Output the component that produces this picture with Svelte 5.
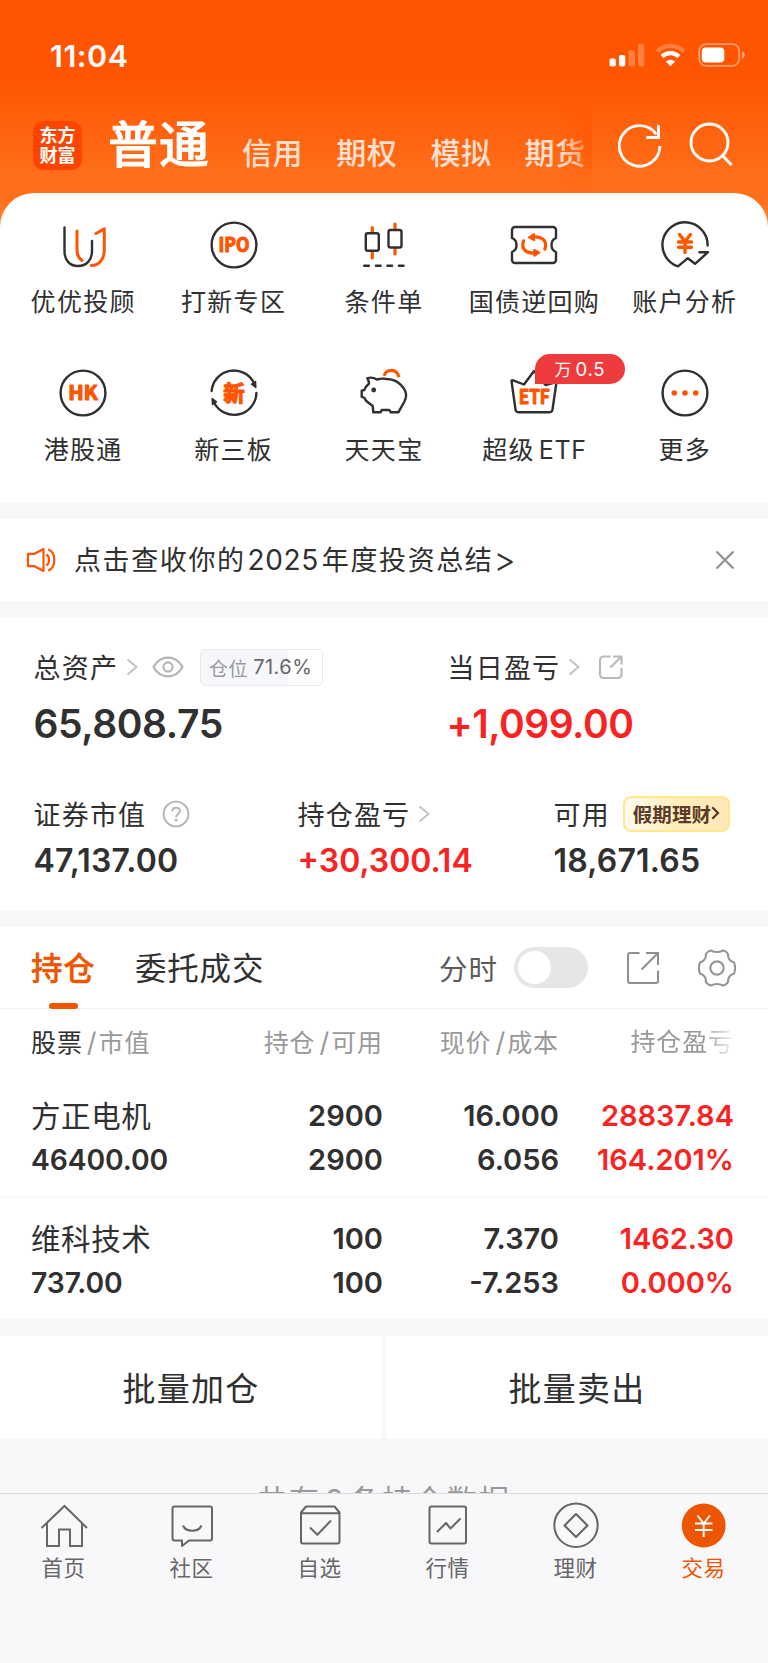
<script>
  const accounts = ['信用', '期权', '模拟', '期货'];
  const shortcuts = [
    { icon: 'uu', label: '优优投顾' },
    { icon: 'ipo', label: '打新专区' },
    { icon: 'cond', label: '条件单' },
    { icon: 'bond', label: '国债逆回购' },
    { icon: 'analysis', label: '账户分析' },
    { icon: 'hk', label: '港股通' },
    { icon: 'neeq', label: '新三板' },
    { icon: 'pig', label: '天天宝' },
    { icon: 'etf', label: '超级', latin: 'ETF', badge: true },
    { icon: 'more', label: '更多' }
  ];
  const positions = [
    { name: '方正电机', value: '46400.00', held: '2900', usable: '2900', price: '16.000', cost: '6.056', profit: '28837.84', rate: '164.201%' },
    { name: '维科技术', value: '737.00', held: '100', usable: '100', price: '7.370', cost: '-7.253', profit: '1462.30', rate: '0.000%' }
  ];
  const tabs = [
    { icon: 'home', label: '首页' },
    { icon: 'chat', label: '社区' },
    { icon: 'pick', label: '自选' },
    { icon: 'market', label: '行情' },
    { icon: 'wealth', label: '理财' },
    { icon: 'trade', label: '交易' }
  ];
</script>

{#snippet chevron()}
  <svg class="chev" width="12" height="18" viewBox="0 0 12 18"><path d="M1.5 1.5 10.5 9l-9 7.5" fill="none" stroke="#c0c0c0" stroke-width="1.8" /></svg>
{/snippet}

<div class="app">
  <header>
    <div class="status">
      <span class="time">11:04</span>
      <svg width="138" height="26" viewBox="0 0 138 26">
        <g fill="#fff">
          <rect x="1.5" y="15.5" width="6.3" height="8" rx="1.8" />
          <rect x="11" y="12" width="6.3" height="11.5" rx="1.8" />
          <g opacity=".25"><rect x="20.6" y="7" width="6.3" height="16.5" rx="1.8" /><rect x="30" y="1" width="6.3" height="22.5" rx="1.8" /></g>
        </g>
        <g fill="none" stroke="#fff">
          <path d="M49.2 8.4a19 19 0 0 1 26.6 0" stroke-width="4.2" opacity=".25" />
          <path d="M54 13.6a12.3 12.3 0 0 1 17 0" stroke-width="4.2" />
          <rect x="91.2" y="1.2" width="40" height="21.6" rx="6.8" stroke-width="1.8" opacity=".42" />
        </g>
        <path d="M62.5 23.2l-4.6-4.6a6.6 6.6 0 0 1 9.2 0z" fill="#fff" />
        <rect x="93.8" y="4.4" width="22.5" height="15.2" rx="4" fill="#fff" />
        <path d="M134 8.3c3.6 1 3.6 6.4 0 7.4z" fill="#fff" opacity=".5" />
      </svg>
    </div>
    <div class="nav">
      <div class="logo"><span>东方</span><span>财富</span></div>
      <div class="current">普通</div>
      <div class="accounts">
        {#each accounts as a}<span>{a}</span>{/each}
        <i class="fade"></i>
      </div>
      <svg class="refresh" width="44" height="46" viewBox="0 0 44 46" fill="none" stroke="#fff" stroke-width="2.9">
        <path d="M41.900 24A20.300 20.300 0 1 1 38.400 12.500" /><path d="M40.500 3v12.500H28.300" />
      </svg>
      <svg class="search" width="44" height="46" viewBox="0 0 44 46" fill="none" stroke="#fff" stroke-width="2.9">
        <circle cx="20.500" cy="20.500" r="18.500" /><path d="M33.500 33.500 42.500 43" />
      </svg>
    </div>
  </header>

  <section class="shortcuts">
    {#each shortcuts as s}
      <div class="shortcut">
        <div class="ico">
          <svg width="48" height="48" viewBox="0 0 48 48" fill="none" stroke="#303030" stroke-width="2.4" stroke-linecap="round" stroke-linejoin="round">
            {#if s.icon === 'uu'}
              <path d="M5.500 6.500V30c0 9 5 15 13.500 15S33 39 33 30V20" />
              <g stroke="#ff5500" stroke-width="3"><path d="M18 10v19c0 4.500 2 8.500 5 10.500M37 12.500l8.300-4.600V29c0 9-4.800 15.300-13 15.600" /></g>
            {:else if s.icon === 'ipo'}
              <circle cx="24" cy="24" r="22.400" />
              <text x="24" y="31" textLength="31" lengthAdjust="spacingAndGlyphs" font-size="19.500">IPO</text>
            {:else if s.icon === 'cond'}
              <g stroke="#ff5500" stroke-width="3.200"><path d="M12.300 6.500v5M12.300 31.500v5.500M35 3v5.500M35 27.500v5.500" /></g>
              <rect x="5.800" y="12.300" width="13" height="17.500" rx="2" /><rect x="28.500" y="9" width="13" height="17.500" rx="2" />
              <path d="M4.300 44.700h4.500M16 44.700h4.500M27.500 44.700H32M39 44.700h4.500" stroke-width="2.600" />
            {:else if s.icon === 'bond'}
              <path d="M5 6h38a3 3 0 0 1 3 3V17c-2.500 1-4.500 3.500-4.500 7s2 6 4.500 7v8a3 3 0 0 1-3 3H5a3 3 0 0 1-3-3v-8c2.500-1 4.500-3.500 4.500-7S4.500 18 2 17V9a3 3 0 0 1 3-3z" />
              {#each [0, 180] as turn}
                <g stroke="#ff5500" stroke-width="3.200" transform="rotate({turn} 24.200 24)"><path d="M13.600 19.800c-2.500 6.500.5 12 9.400 12.300" /><path d="M24.200 28.800v6l5.200-3.200z" fill="#ff5500" stroke-width="2" /></g>
              {/each}
            {:else if s.icon === 'analysis'}
              <path d="M46.600 24.500A22.600 22.600 0 1 0 17 45.400l9.800-8.200 7.200 5.600 13-11.600h-8.500" />
              <path d="m18.500 13.500 5.500 7 5.500-7M24 21v10.500M17.500 21h13M17.500 26.300h13" stroke="#ff5500" stroke-width="3.400" />
            {:else if s.icon === 'hk'}
              <circle cx="24" cy="24" r="22.400" />
              <text x="24" y="31" textLength="29.500" lengthAdjust="spacingAndGlyphs" font-size="19.500">HK</text>
            {:else if s.icon === 'neeq'}
              <path d="M1.600 22A22.400 22.400 0 0 1 44 14M46.400 24A22.400 22.400 0 0 1 4 33.500" />
              <path d="M45.500 12.500l.3 6-4.200-3.300zM2.500 35.500l-.3-6 4.200 3.300z" fill="#303030" stroke-width="1.500" />
              <text x="24" y="31.500" font-size="21.500">新</text>
            {:else if s.icon === 'pig'}
              <path d="M7.300 9.300C10 8.300 14.500 9 17 10.500 20 9.600 24 9.500 27 10c4 .2 8 1.200 11.300 3.700C42 16.500 45 20 46 24.500c.6 3-.5 5.500-1.500 8L38.300 43.300h-7.600L29.300 41h-7.600l-1 2.300h-7.400L12.700 37 6 31.700 4.500 29 1.700 27.700v-6l2.600-.7C5 18.500 6.800 16.500 9 14.500c0-2-.7-3.700-1.700-5.200z" />
              <circle cx="13.700" cy="21" r="2.400" fill="#303030" stroke="none" />
              <path d="M24 6.700C26-.5 37-1 39 8.200" stroke="#ff5500" stroke-width="3.200" stroke-linecap="butt" />
            {:else if s.icon === 'etf'}
              <path d="m1.500 12 4 28.500a3 3 0 0 0 3 2.700h31a3 3 0 0 0 3-2.700l4-27.500-11 3L24 2 14 15.500 3 11.300q-1.500-.4-1.500.7z" />
              <text x="24.200" y="35.300" textLength="31" lengthAdjust="spacingAndGlyphs" font-size="19.500">ETF</text>
            {:else}
              <circle cx="24" cy="24" r="22.400" />
              <g fill="#ff5500" stroke="none"><circle cx="13.300" cy="24" r="2.800" /><circle cx="24" cy="24" r="2.800" /><circle cx="34.700" cy="24" r="2.800" /></g>
            {/if}
          </svg>
          {#if s.badge}<b class="badge">万<span>0.5</span></b>{/if}
        </div>
        <div class="label">{s.label}{#if s.latin}<span class="latin">{s.latin}</span>{/if}</div>
      </div>
    {/each}
  </section>

  <section class="notice">
    <svg width="30" height="28" viewBox="0 0 30 28" fill="none" stroke="#ff5500" stroke-width="2.200" stroke-linejoin="round">
      <path d="M2 7.800h6.500L17.500 3v22l-9-4.800H2zM20.500 8.500c3.500 2.500 3.500 8.500 0 11M22.300 3.300c8 3.700 8 17.700 0 21.400" />
    </svg>
    <p>点击查收你的<span>2025</span>年度投资总结<em>&gt;</em></p>
    <svg width="20" height="20" viewBox="0 0 20 20" stroke="#8e8e8e" stroke-width="2.100"><path d="m1.500 1.500 17 17M18.500 1.500l-17 17" /></svg>
  </section>

  <section class="assets">
    <div class="top">
      <div class="cell">
        <div class="cap">
          总资产{@render chevron()}
          <svg class="eye" width="32" height="24" viewBox="0 0 32 24" fill="none" stroke="#b5b5b5" stroke-width="2.100"><path d="M1.500 12C8.500-.5 23.500-.5 30.500 12 23.500 24.500 8.500 24.500 1.500 12z" /><circle cx="16" cy="12" r="4.600" /></svg>
          <span class="ratio">仓位<span>71.6%</span></span>
        </div>
        <div class="big">65,808.75</div>
      </div>
      <div class="cell">
        <div class="cap">
          当日盈亏{@render chevron()}
          <svg class="share" width="26" height="26" viewBox="0 0 26 26" fill="none" stroke="#b8b8b8" stroke-width="2.100"><path d="M12.500 2.500H5.500a3.500 3.500 0 0 0-3.500 3.500v14.500a3.500 3.500 0 0 0 3.500 3.500H20a3.500 3.500 0 0 0 3.500-3.500v-6.500M15 2.500h8.500v8M23.300 2.700 12.500 13.500" /></svg>
        </div>
        <div class="big red plus">+1,099.00</div>
      </div>
    </div>
    <div class="sub">
      <div class="cell">
        <div class="cap">证券市值
          <svg class="help" width="28" height="28" viewBox="0 0 28 28" fill="none" stroke="#b5b5b5" stroke-width="1.900"><circle cx="14" cy="14" r="12.400" /><path d="M10.200 11.500c0-5 7.800-4.800 7.800-.6 0 3-3.900 3.200-3.900 6.300" /><circle cx="14.100" cy="20" r=".6" /></svg>
        </div>
        <div class="mid">47,137.00</div>
      </div>
      <div class="cell">
        <div class="cap">持仓盈亏{@render chevron()}</div>
        <div class="mid red gain">+30,300.14</div>
      </div>
      <div class="cell">
        <div class="cap">可用<span class="promo">假期理财<svg width="9" height="14" viewBox="0 0 9 14"><path d="m1.300 1.300 5.700 5.700-5.700 5.700" fill="none" stroke="#5b3a28" stroke-width="2.300" /></svg></span></div>
        <div class="mid">18,671.65</div>
      </div>
    </div>
  </section>

  <section class="holdings">
    <div class="bar">
      <div class="tab on">持仓</div>
      <div class="tab">委托成交</div>
      <div class="intraday">分时</div>
      <div class="toggle"><i></i></div>
      <svg class="out" width="34" height="34" viewBox="0 0 34 34" fill="none" stroke="#8f8f8f" stroke-width="2"><path d="M13.500 2H4a2 2 0 0 0-2 2v26a2 2 0 0 0 2 2h26a2 2 0 0 0 2-2V19.500M20 2h12v12M32 2 15.500 18.500" /></svg>
      <svg class="gear" width="40" height="40" viewBox="-1 -1 42 42" fill="none" stroke="#949494" stroke-width="2.200" stroke-linejoin="round"><circle cx="20" cy="20" r="7" /><path d="M14.200 1.700C17 3.700 23 3.700 25.800 1.700c2.700.3 5 2 5.900 4.300C31.300 10 34 13.300 37.800 14q2.400 6 0 12C34 26.700 31.300 30 31.700 34c-.9 2.300-3.200 4-5.900 4.300-2.800-2-8.800-2-11.600 0C11.500 38 9.200 36.300 8.300 34 8.700 30 6 26.700 2.200 26q-2.400-6 0-12C6 13.300 8.700 10 8.300 6c.9-2.300 3.200-4 5.900-4.300z" /></svg>
    </div>
    <div class="grid head">
      <div><b>股票</b><i>/</i>市值</div>
      <div>持仓<i>/</i>可用</div>
      <div>现价<i>/</i>成本</div>
      <div class="cut">持仓盈亏</div>
    </div>
    {#each positions as p}
      <div class="grid row">
        <div><span class="name">{p.name}</span><span class="value">{p.value}</span></div>
        <div><span>{p.held}</span><span>{p.usable}</span></div>
        <div><span>{p.price}</span><span>{p.cost}</span></div>
        <div class="red"><span>{p.profit}</span><span>{p.rate}</span></div>
      </div>
    {/each}
  </section>

  <section class="batch"><div>批量加仓</div><div>批量卖出</div></section>
  <div class="summary">共有<span>2</span>条持仓数据</div>

  <nav class="tabbar">
    {#each tabs as t}
      <div class="item" class:active={t.icon === 'trade'}>
        <svg width="48" height="48" viewBox="0 0 48 48" fill="none" stroke="#666" stroke-width="2" stroke-linejoin="round">
          {#if t.icon === 'home'}
            <path d="M1.500 26 24.500 4l22.500 22M7 21.500V44h12V27.500h11V44h12V21.500" stroke-linejoin="miter" />
          {:else if t.icon === 'chat'}
            <path d="M6.500 4.500H42a2 2 0 0 1 2 2v30a2 2 0 0 1-2 2H21l-7 5.500v-5.500H6.500a2 2 0 0 1-2-2v-30a2 2 0 0 1 2-2zM15 23.500c3 7 15.500 7 18.500 0" />
          {:else if t.icon === 'pick'}
            <path d="M5 10.500 10 4.500h28.500l5 6v29a2 2 0 0 1-2 2H7a2 2 0 0 1-2-2zM5 11.200h38.500M14 25.500l7.300 7.200L35 18.500" />
          {:else if t.icon === 'market'}
            <rect x="5.500" y="4.500" width="36.500" height="37" rx="2" /><path d="m13 30 9-9 4.500 5.500L36.500 16.500" />
          {:else if t.icon === 'wealth'}
            <circle cx="24" cy="23.300" r="21.700" /><path d="m24 12 11.500 11.500L24 35 12.500 23.500z" />
          {:else}
            <circle cx="23.700" cy="23.500" r="21.900" fill="#ee5500" stroke="none" /><path d="m17.500 13.500 6.200 8 6.200-8M23.700 21.500V35M15 21.500h17.400M15 28h17.400" stroke="#fff" />
          {/if}
        </svg>
        <span>{t.label}</span>
      </div>
    {/each}
  </nav>
</div>

<style>
  :global(body) { margin: 0; background: #f6f7f9; }
  .app {
    width: 768px; height: 1663px; overflow: hidden; display: flex; flex-direction: column;
    background: #f6f7f9; color: #303030;
    font-family: Inter, 'Noto Sans CJK SC', sans-serif;
  }
  .app :global(*) { box-sizing: border-box; }
  svg { flex: none; display: block; }
  i, em { font-style: normal; }
  section { background: #fff; flex: none; }
  .red { color: #f92323; }

  header { height: 235px; margin-bottom: -42px; flex: none; background: linear-gradient(#ff5500 0, #ff5500 78px, #ff6e1a 175px, #ff6e1a 200px, #ff8f50 235px); color: #fff; }
  .status { height: 112px; padding: 0 22px 0 50px; display: flex; align-items: center; justify-content: space-between; }
  .time { font-size: 30.500px; font-weight: 600; letter-spacing: .5px; padding-bottom: 1px; }
  .nav { height: 80px; display: flex; align-items: flex-start; padding-left: 33px; margin-top: -9px; }
  .logo { width: 49px; height: 49px; margin-top: 18px; border-radius: 10px; background: #ff4400; display: flex; flex-direction: column; align-items: center; justify-content: center; font-size: 18px; line-height: 20.500px; padding-top: 1px; font-weight: 700; }
  .current { margin-left: 26px; margin-top: 11px; width: 134px; font-size: 50px; line-height: 62px; font-weight: 500; letter-spacing: 1px; white-space: nowrap; -webkit-text-stroke: .8px #fff; }
  .accounts { position: relative; width: 350px; height: 90px; display: flex; gap: 33px; overflow: hidden; padding-top: 30px; font-size: 30px; line-height: 40px; letter-spacing: .6px; color: #ffe0d0; font-weight: 500; white-space: nowrap; }
  .fade { position: absolute; right: 0; top: 0; width: 32px; height: 90px; background: linear-gradient(90deg, rgba(255, 94, 8, 0), #ff5a06); -webkit-mask: linear-gradient(#000, #000 40%, rgba(0, 0, 0, .55) 60%, transparent); mask: linear-gradient(#000, #000 40%, rgba(0, 0, 0, .55) 60%, transparent); }
  .refresh { margin: 19px 0 0 26px; }
  .search { margin: 19px 0 0 27px; }

  .shortcuts { height: 310px; border-radius: 34px 34px 0 0; padding: 28px 8px 0; display: grid; grid-template-columns: repeat(5, 1fr); grid-auto-rows: 147.500px; position: relative; }
  .shortcut { display: flex; flex-direction: column; align-items: center; }
  .ico { position: relative; width: 48px; height: 48px; }
  .ico svg { overflow: visible; }
  .ico text { fill: #ff5500; stroke: #ff5500; stroke-width: 1.200px; text-anchor: middle; font-weight: 700; font-family: 'Noto Sans CJK SC', sans-serif; }
  .label { margin: 14px 0 0; height: 38px; line-height: 38px; font-size: 25px; letter-spacing: 1.300px; white-space: nowrap; }
  .latin { margin-left: 4px; letter-spacing: .6px; }
  .badge { position: absolute; left: 24.500px; top: -15px; width: 90px; height: 30px; border-radius: 15px 15px 15px 0; background: #ee3b3e; color: #fff; font-weight: 400; font-size: 17px; line-height: 30px; text-align: center; }
  .badge span { font-size: 18.500px; letter-spacing: .8px; margin-left: 4px; }

  .notice { margin-top: 16px; height: 82px; display: flex; align-items: center; padding: 0 33px 0 26px; }
  .notice p { flex: 1; margin: 1px 0 0 18px; font-size: 27px; line-height: 40px; letter-spacing: 1.600px; white-space: nowrap; }
  .notice p span { margin: 0 3px 0 2px; font-size: 28px; letter-spacing: .6px; }
  .notice p em { margin-left: 0; font-size: 34px; line-height: 30px; font-weight: 300; vertical-align: -2px; }

  .assets { margin-top: 16px; height: 294px; padding-top: 28px; }
  .cap { display: flex; align-items: center; height: 44px; padding-bottom: 2px; font-size: 27px; letter-spacing: 1.200px; white-space: nowrap; }
  .cap > :global(*) { margin-top: 2px; }
  .chev { margin-left: 8px; }
  .top, .sub { display: grid; padding-left: 33.500px; }
  .top { grid-template-columns: 414px 1fr; height: 147px; }
  .sub { grid-template-columns: 264px 256px 1fr; }
  .eye { margin-left: 14px; }
  .ratio { margin-left: 16px; width: 123px; height: 37px; border: 1.500px solid #e9eaec; border-radius: 5px; display: flex; align-items: center; padding-left: 8px; background: linear-gradient(90deg, #f6f7fb 71.600%, #fff 71.600%); color: #9a9a9a; font-size: 19px; letter-spacing: .5px; }
  .ratio span { margin-left: 5px; color: #666; font-size: 20px; letter-spacing: .5px; }
  .share { margin-left: 18px; }
  .big { font-size: 39px; line-height: 48px; margin-top: 11px; font-weight: 600; letter-spacing: -.4px; }
  .plus { margin-left: -1px; letter-spacing: -.5px; }
  .mid { font-size: 32px; line-height: 40px; margin-top: 5px; font-weight: 600; letter-spacing: .2px; }
  .gain { letter-spacing: 0; }
  .help { margin-left: 16px; }
  .promo { margin-left: 13px; width: 107px; height: 36px; border-radius: 8px; border: 2px solid #fde88c; background: linear-gradient(100deg, #fffaf0, #ffeeb9 50%, #ffe7b8); color: #5b3a28; font-size: 19.500px; font-weight: 700; letter-spacing: .1px; display: flex; align-items: center; justify-content: center; padding-bottom: 2px; }

  .holdings { margin-top: 16px; height: 392px; }
  .bar { height: 82px; display: flex; align-items: center; padding-left: 31px; border-bottom: 1px solid #eff0f2; }
  .tab { font-size: 31.500px; letter-spacing: .8px; height: 82px; line-height: 83px; width: 104px; white-space: nowrap; }
  .tab.on { color: #ee5500; font-weight: 500; position: relative; -webkit-text-stroke: .4px #ee5500; }
  .tab.on::after { content: ''; position: absolute; left: 18px; bottom: 0; width: 29px; height: 5.500px; border-radius: 3px; background: #ee5500; }
  .intraday { margin-left: 200px; width: 75px; font-size: 28.500px; letter-spacing: 1px; color: #5b5b5b; white-space: nowrap; padding-bottom: 1px; }
  .toggle { width: 74px; height: 41px; border-radius: 21px; background: #e4e6e8; padding: 4px; }
  .toggle i { display: block; width: 33px; height: 33px; border-radius: 50%; background: #fff; }
  .out { margin-left: 38px; }
  .gear { margin-left: 37px; }
  .grid { display: grid; grid-template-columns: 221px 131px 176px 175px; padding-left: 31px; text-align: right; white-space: nowrap; }
  .grid > div:first-child { text-align: left; }
  .head { height: 66px; line-height: 67px; font-size: 25px; letter-spacing: .9px; color: #999; }
  .head b { color: #303030; font-weight: 400; }
  .head i { margin: 0 2px 0 4px; font-size: 27px; letter-spacing: 0; }
  .cut { -webkit-mask: linear-gradient(90deg, #000 82%, transparent 102%); mask: linear-gradient(90deg, #000 82%, transparent 102%); }
  .row { height: 123px; padding-top: 19px; border-bottom: 2px solid #f6f7f9; font-size: 29px; font-weight: 600; }
  .row span { display: block; height: 44px; line-height: 44px; }
  .row .name { font-size: 29.500px; font-weight: 400; letter-spacing: .6px; }
  .row .value { font-size: 28.300px; letter-spacing: -.1px; }

  .batch { margin-top: 17px; height: 103px; display: grid; grid-template-columns: 1fr 1fr; gap: 4px; background: #f6f7f9; }
  .batch div { background: #fff; display: flex; align-items: center; justify-content: center; font-size: 33px; letter-spacing: 1.300px; padding-bottom: 1px; }
  .summary { height: 54px; padding-top: 39px; flex: none; overflow: hidden; text-align: center; font-size: 30px; line-height: 44px; letter-spacing: 2.300px; color: #999; }
  .summary span { margin: 0 4px; }
  .tabbar { flex: 1; background: #f8f8fb; border-top: 1px solid #dcdcde; display: grid; grid-template-columns: repeat(6, 128px); }
  .item { display: flex; flex-direction: column; align-items: center; padding-top: 8px; color: #666; font-size: 21.500px; letter-spacing: .6px; }
  .item span { margin: 4px 1px 0 0; line-height: 28px; }
  .item.active { color: #ee5500; }
</style>
